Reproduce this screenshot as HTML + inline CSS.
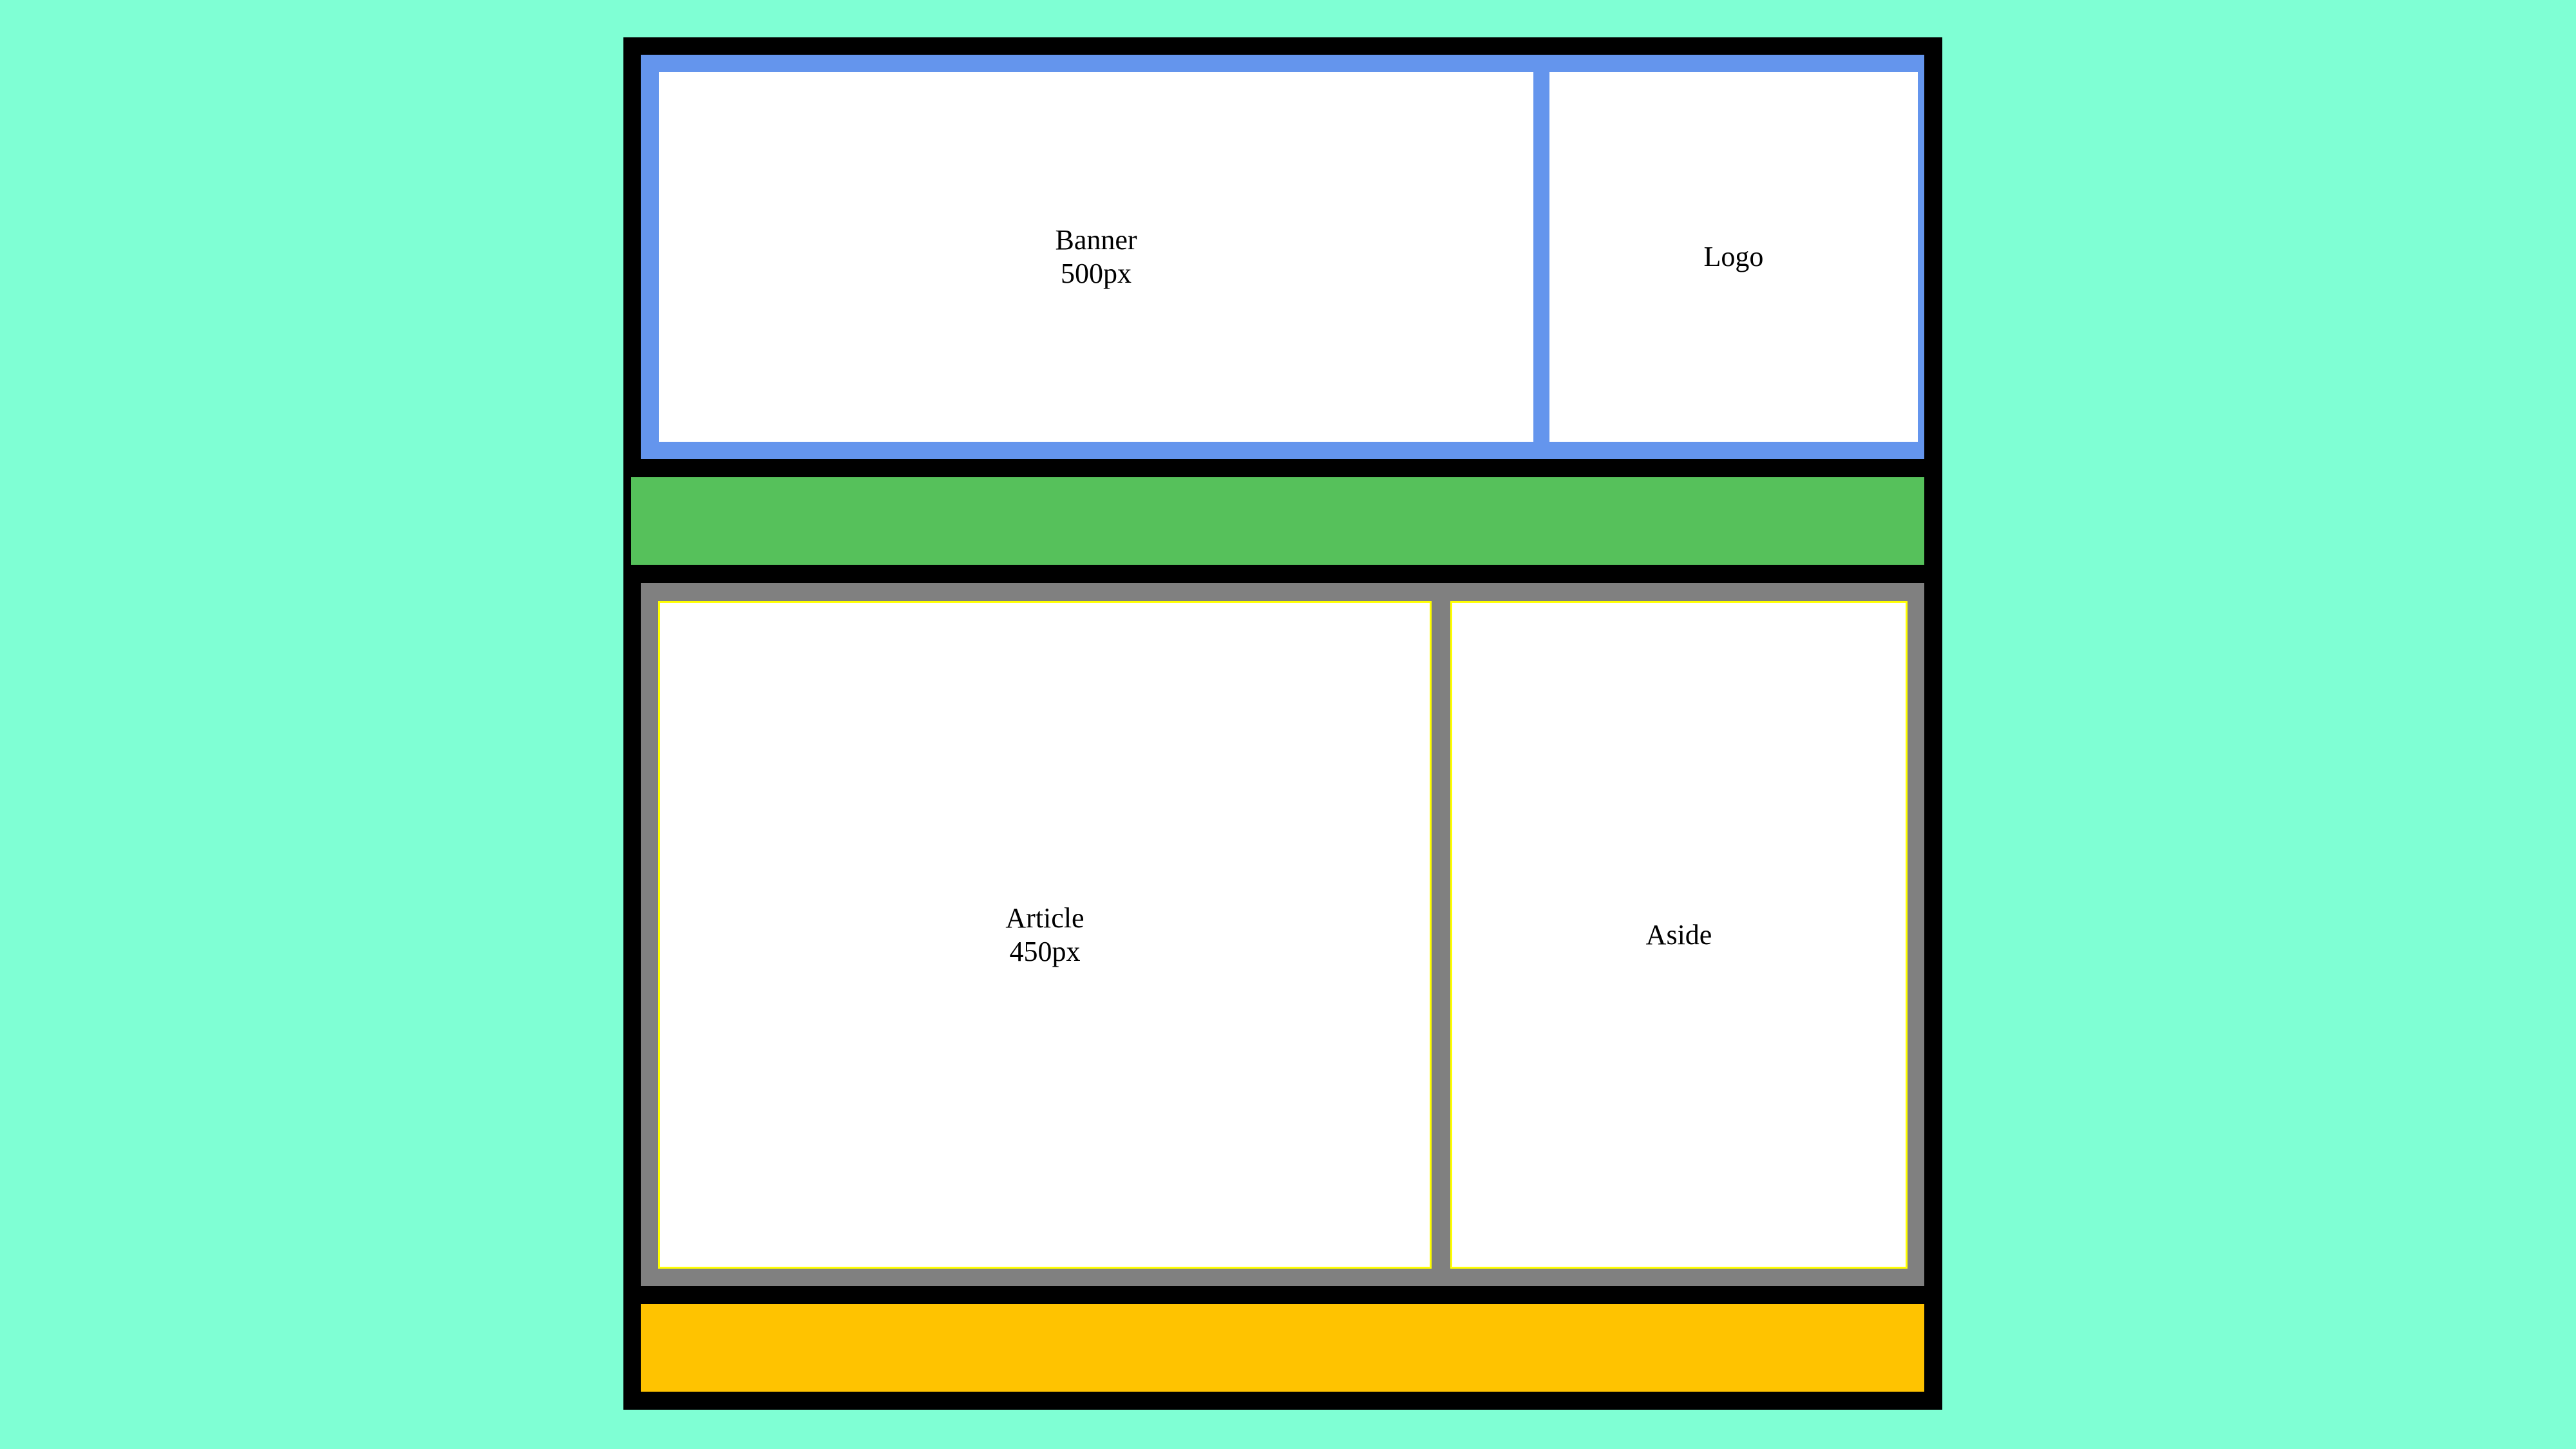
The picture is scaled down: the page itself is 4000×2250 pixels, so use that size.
<!DOCTYPE html>
<html><head><meta charset="utf-8"><style>
html,body{margin:0;padding:0;}
body{width:4000px;height:2250px;background:#7fffd4;position:relative;overflow:hidden;font-family:"Liberation Serif",serif;font-size:44px;line-height:52px;color:#000;}
div{position:absolute;box-sizing:border-box;}
.w{background:#fff;display:flex;align-items:center;justify-content:center;text-align:center;}
.y{border:3px solid #ffff00;}
</style></head><body>
<div style="left:968px;top:58px;width:2048px;height:2131px;background:#000"></div>
<div style="left:995px;top:85px;width:1993px;height:628px;background:#6495ed"></div>
<div class="w" style="left:1023px;top:112px;width:1358px;height:574px">Banner<br>500px</div>
<div class="w" style="left:2406px;top:112px;width:572px;height:574px">Logo</div>
<div style="left:980px;top:741px;width:2008px;height:136px;background:#56c15b"></div>
<div style="left:995px;top:905px;width:1993px;height:1092px;background:#808080"></div>
<div class="w y" style="left:1022px;top:933px;width:1201px;height:1037px">Article<br>450px</div>
<div class="w y" style="left:2252px;top:933px;width:710px;height:1037px">Aside</div>
<div style="left:995px;top:2025px;width:1993px;height:136px;background:#ffc300"></div>
</body></html>
